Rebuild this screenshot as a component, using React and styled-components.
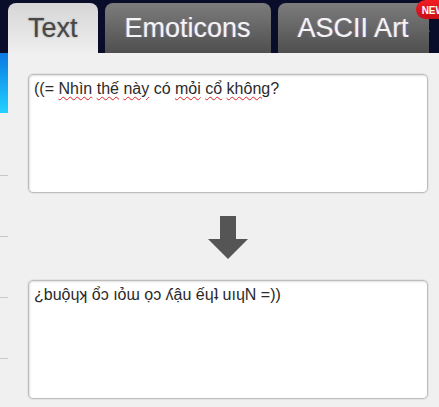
import styled, { createGlobalStyle } from "styled-components";

const Global = createGlobalStyle`
html, body {
  margin:0;
  padding:0;
  background:#f0f0f0;
  overflow:hidden;
}
body {
  font-family:"Liberation Sans", Arial, sans-serif;
}
`;

const Page = styled.div`
width:439px;
height:407px;
display:flex;
flex-direction:column;
background:#f0f0f0;
`;

const Header = styled.div`
height:53px;
flex-shrink:0;
box-sizing:border-box;
padding:3px 0 0 8px;
display:flex;
gap:7px;
background-color:#0a0d2a;
background-image:
  radial-gradient(1px 1px at 13px 7px, #6a72a8 50%, transparent),
  radial-gradient(1px 1px at 41px 31px, #4d5588 50%, transparent),
  radial-gradient(1px 1px at 67px 15px, #7d84b8 50%, transparent),
  radial-gradient(1px 1px at 88px 44px, #3f4678 50%, transparent),
  radial-gradient(1px 1px at 29px 49px, #5a6196 50%, transparent);
background-size:97px 53px;
`;

const Tab = styled.div`
position:relative;
height:50px;
line-height:50px;
padding:0 20px;
border-radius:8px 8px 0 0;
font-size:27px;
white-space:nowrap;
color:${p => p.$active ? "#474747" : "#f4f4f4"};
text-shadow:${p => p.$active ? "0 0 2px rgba(0,0,0,.35)" : "-1px 0 1px rgba(255,160,60,.35), 1px 0 1px rgba(60,140,255,.45)"};
background:${p => p.$active
  ? "linear-gradient(#d6d6d6, #efefef)"
  : "linear-gradient(#7c7c7c, #4f4f4f)"};
`;

const Badge = styled.div`
position:absolute;
top:-3px;
left:calc(100% - 13px);
height:19px;
padding:0 10px 0 6px;
border-radius:12px;
background:linear-gradient(#f21d22, #c80f14);
color:#fff;
font-size:10px;
font-weight:bold;
line-height:21px;
text-shadow:none;
`;

const Body = styled.div`
flex:1;
display:flex;
`;

const Sidebar = styled.div`
width:8px;
flex-shrink:0;
display:flex;
flex-direction:column;
`;

const SideItem = styled.div`
height:${p => p.$h}px;
flex-shrink:0;
box-sizing:border-box;
background:${p => p.$active ? "linear-gradient(#0a78e2, #22d2ff)" : "transparent"};
border-bottom:${p => p.$active ? "none" : "1px solid #c9c9c9"};
`;

const Main = styled.div`
flex:1;
padding:21px 11px 0 20px;
display:flex;
flex-direction:column;
`;

const Box = styled.div`
height:119px;
box-sizing:border-box;
border:1px solid #bdbdbd;
border-radius:5px;
background:#fff;
box-shadow:inset 1px 1px 2px rgba(0,0,0,.12), 0 0 0 1px #e4e4e4;
padding:4px 5px;
font-size:16px;
line-height:19px;
color:#2a2a2a;
white-space:nowrap;
overflow:hidden;
`;

const Misspelt = styled.span`
text-decoration:underline wavy #e02020;
text-decoration-thickness:1px;
text-underline-offset:2px;
`;

const ArrowRow = styled.div`
height:87px;
display:flex;
align-items:flex-start;
justify-content:center;
padding-top:23px;
box-sizing:border-box;
`;

const DownArrow = () => (
  <svg width="40" height="43" viewBox="0 0 40 43">
    <path d="M12 0H28V23H40L20 43L0 23H12Z" fill="#555" />
  </svg>
);

const App = () => {
  return (
    <Page>
      <Global />
      <Header>
        <Tab $active>Text</Tab>
        <Tab>Emoticons</Tab>
        <Tab>ASCII Art<Badge>NEW</Badge></Tab>
      </Header>
      <Body>
        <Sidebar>
          <SideItem $active $h={60} />
          <SideItem $h={63} />
          <SideItem $h={61} />
          <SideItem $h={61} />
          <SideItem $h={61} />
        </Sidebar>
        <Main>
          <Box>
            ((= <Misspelt>Nhìn</Misspelt> <Misspelt>thế</Misspelt> <Misspelt>này</Misspelt> có <Misspelt>mỏi</Misspelt> <Misspelt>cổ</Misspelt> <Misspelt>không</Misspelt>?
          </Box>
          <ArrowRow>
            <DownArrow />
          </ArrowRow>
          <Box>¿buộɥʞ ổɔ ıỏɯ ọɔ ʎậu ếɥʇ uıɥN =))</Box>
        </Main>
      </Body>
    </Page>
  );
};

export default App;
